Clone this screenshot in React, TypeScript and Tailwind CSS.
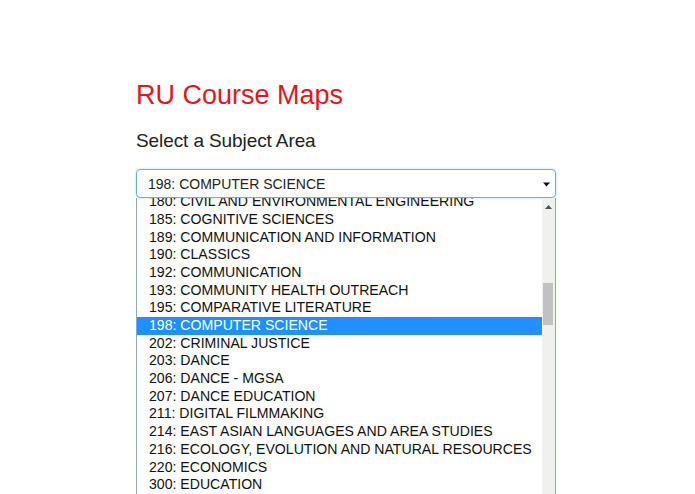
import React from "react";

const subjects = [
  "180: CIVIL AND ENVIRONMENTAL ENGINEERING",
  "185: COGNITIVE SCIENCES",
  "189: COMMUNICATION AND INFORMATION",
  "190: CLASSICS",
  "192: COMMUNICATION",
  "193: COMMUNITY HEALTH OUTREACH",
  "195: COMPARATIVE LITERATURE",
  "198: COMPUTER SCIENCE",
  "202: CRIMINAL JUSTICE",
  "203: DANCE",
  "206: DANCE - MGSA",
  "207: DANCE EDUCATION",
  "211: DIGITAL FILMMAKING",
  "214: EAST ASIAN LANGUAGES AND AREA STUDIES",
  "216: ECOLOGY, EVOLUTION AND NATURAL RESOURCES",
  "220: ECONOMICS",
  "300: EDUCATION",
];

const selected = "198: COMPUTER SCIENCE";

export default function App() {
  return (
    <div className="w-[695px] h-[494px] overflow-hidden bg-white font-['Liberation_Sans',Arial,sans-serif]">
      <div className="ml-[136px] w-[420px] pt-[82px]">
        <h1 className="text-[27px] leading-[27px] text-[#e8141b]">RU Course Maps</h1>
        <h2 className="mt-[22px] text-[19px] leading-[19px] tracking-[-0.1px] text-[#222]">Select a Subject Area</h2>

        {/* open native-looking select */}
        <div className="mt-[19px]">
          <div className="flex h-[29px] items-center justify-between rounded-[4px] border border-[#66afe9] pl-[11px] pr-[4px] pt-[1px] shadow-[0_0_3px_rgba(102,175,233,0.45)]">
            <span className="text-[14px] leading-[16px] text-[#222]">{selected}</span>
            <svg width="7" height="5" viewBox="0 0 7 5" className="mr-[1px]">
              <path d="M0 0.5H7L3.5 4.5Z" fill="#111" />
            </svg>
          </div>

          <div className="flex h-[300px] overflow-hidden border border-t-0 border-[#8fa7c6]">
            <div className="flex-1 overflow-hidden">
              <ul className="mt-[-4.8px]">
                {subjects.map((s) => (
                  <li
                    key={s}
                    className={
                      "h-[17.7px] whitespace-nowrap pl-[12px] text-[14.1px] leading-[17.7px] " +
                      (s === selected ? "bg-[#1e90ff] text-white" : "text-[#111]")
                    }
                  >
                    {s}
                  </li>
                ))}
              </ul>
            </div>
            <div className="relative w-[13px] bg-[#f0f0f0]">
              <svg width="7" height="4" viewBox="0 0 7 4" className="absolute left-[3px] top-[7px]">
                <path d="M0 4H7L3.5 0Z" fill="#505050" />
              </svg>
              <div className="absolute left-[1px] top-[85px] h-[42px] w-[10px] bg-[#c1c1c1]" />
            </div>
          </div>
        </div>
      </div>
    </div>
  );
}
